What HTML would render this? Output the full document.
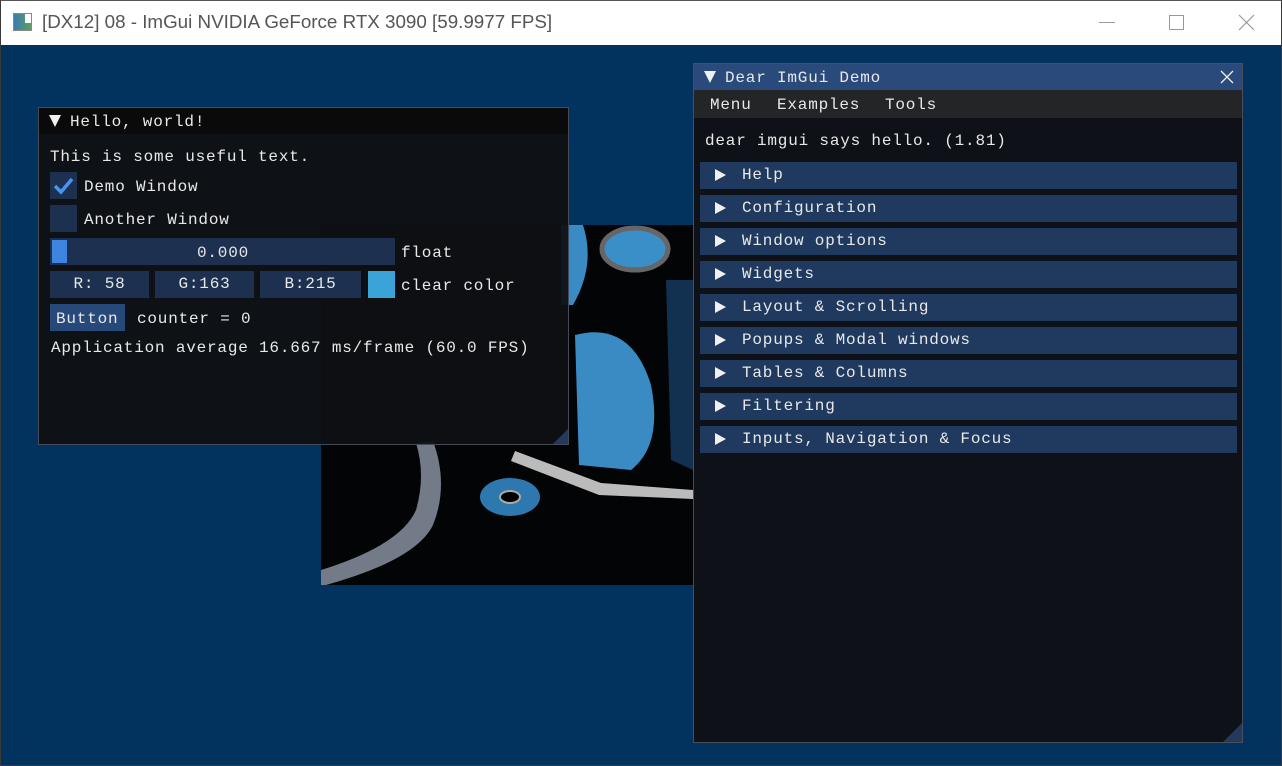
<!DOCTYPE html>
<html><head><meta charset="utf-8"><style>
*{margin:0;padding:0;box-sizing:border-box}
body{width:1282px;height:766px;overflow:hidden;background:#02335f;position:relative;font-family:"Liberation Mono","DejaVu Sans Mono",monospace;font-size:16px;letter-spacing:0.8px;color:#e8e8e8}
.abs{position:absolute}
#frame{left:0;top:0;width:1282px;height:766px;border:1px solid #3a3a3a;border-top:1px solid #555}
#tb{left:1px;top:1px;width:1280px;height:44px;background:#fff;font-family:"Liberation Sans",sans-serif;letter-spacing:0;font-size:18px;color:#444}
.t{position:absolute;white-space:pre;line-height:18px}
.box{position:absolute}
.hdr{position:absolute;left:700px;width:537px;height:27px;background:#1f3a5e}
.hdr .tri{position:absolute;left:15px;top:7px;width:0;height:0;border-left:11px solid #f0f0f0;border-top:6.5px solid transparent;border-bottom:6.5px solid transparent}
.hdr span{position:absolute;left:42px;top:4px;white-space:pre;line-height:18px}
.fbox{background:#1d3050;position:absolute;height:27px;top:163px;text-align:center;line-height:27px}
</style></head><body>
<div id="tb" class="abs">
 <div class="abs" style="left:12px;top:12px;width:19px;height:18px;border:1px solid #888;background:linear-gradient(90deg,#3a7ab0,#5aa060)"></div>
 <div class="abs" style="left:24px;top:13px;width:6px;height:9px;background:#fff"></div>
 <div class="t" style="left:41px;top:12px;font-size:18.8px;color:#555">[DX12] 08 - ImGui NVIDIA GeForce RTX 3090 [59.9977 FPS]</div>
 <div class="abs" style="left:1098px;top:21px;width:16px;height:1px;background:#999"></div>
 <div class="abs" style="left:1168px;top:14px;width:15px;height:15px;border:1px solid #999"></div>
 <svg class="abs" style="left:1237px;top:13px" width="18" height="18"><path d="M1 1L16 16M16 1L1 16" stroke="#999" stroke-width="1.2"/></svg>
</div>

<!-- background image -->
<div class="abs" style="left:321px;top:225px;width:372px;height:360px;background:#030405;overflow:hidden">
 <svg width="372" height="360">
  <ellipse cx="314" cy="24" rx="33" ry="21" fill="#3b8fc8" stroke="#666" stroke-width="5"/>
  <path d="M254 110 Q310 95 330 160 Q342 220 310 245 L258 240 Z" fill="#3a8ac4"/>
  <path d="M240 0 L262 0 Q275 40 252 80 L240 80Z" fill="#3a8ac4"/>
  <path d="M345 55 L372 55 L372 245 L350 235Z" fill="#123050"/>
  <ellipse cx="189" cy="272" rx="30" ry="19" fill="#2e78b0"/>
  <ellipse cx="189" cy="272" rx="10" ry="6" fill="#000" stroke="#aaa" stroke-width="2"/>
  <path d="M194 226 L280 258 L372 265 L372 274 L278 270 L190 236Z" fill="#bbb"/>
  <path d="M0 345 Q80 320 95 285 Q105 250 95 218 L112 216 Q128 260 112 300 Q95 335 5 360 L0 360Z" fill="#8f9aa8" opacity="0.8"/>
 </svg>
</div>

<!-- Hello window -->
<div class="abs" style="left:38px;top:107px;width:531px;height:338px;border:1px solid #464a55;background:rgba(15,16,19,0.94)">
 <div class="abs" style="left:0;top:0;width:529px;height:26px;background:#0a0a0b"></div>
 <div class="abs" style="left:10px;top:7px;width:0;height:0;border-top:12px solid #f0f0f0;border-left:6.5px solid transparent;border-right:6.5px solid transparent"></div>
 <div class="t" style="left:31px;top:5px">Hello, world!</div>
 <div class="t" style="left:11px;top:40px">This is some useful text.</div>
 <div class="box" style="left:11px;top:64px;width:27px;height:27px;background:#1d3050"></div>
 <svg class="abs" style="left:13px;top:66px" width="24" height="24"><path d="M3 12L9 18L20 5" stroke="#4596f0" stroke-width="3.5" fill="none"/></svg>
 <div class="t" style="left:45px;top:70px">Demo Window</div>
 <div class="box" style="left:11px;top:97px;width:27px;height:27px;background:#1d3050"></div>
 <div class="t" style="left:45px;top:103px">Another Window</div>
 <div class="box" style="left:11px;top:130px;width:345px;height:27px;background:#1d3050"></div>
 <div class="box" style="left:13px;top:132px;width:15px;height:23px;background:#3d85e0"></div>
 <div class="t" style="left:158px;top:136px">0.000</div>
 <div class="t" style="left:362px;top:136px">float</div>
 <div class="fbox" style="left:11px;width:99px">R: 58</div>
 <div class="fbox" style="left:116px;width:99px">G:163</div>
 <div class="fbox" style="left:221px;width:101px">B:215</div>
 <div class="box" style="left:329px;top:163px;width:27px;height:27px;background:#3aa3d7"></div>
 <div class="t" style="left:362px;top:169px">clear color</div>
 <div class="box" style="left:11px;top:196px;width:75px;height:27px;background:#27497a"></div>
 <div class="t" style="left:17px;top:202px">Button</div>
 <div class="t" style="left:98px;top:202px">counter = 0</div>
 <div class="t" style="left:12px;top:231px">Application average 16.667 ms/frame (60.0 FPS)</div>
 <div class="abs" style="right:0;bottom:0;width:0;height:0;border-bottom:15px solid #233a5c;border-left:15px solid transparent"></div>
</div>

<!-- Demo window -->
<div class="abs" style="left:693px;top:63px;width:550px;height:680px;border:1px solid #4a4e58;background:rgba(15,16,19,0.95)">
 <div class="abs" style="left:0;top:0;width:548px;height:26px;background:#2a4a7c"></div>
 <div class="abs" style="left:10px;top:7px;width:0;height:0;border-top:12px solid #f0f0f0;border-left:6.5px solid transparent;border-right:6.5px solid transparent"></div>
 <div class="t" style="left:31px;top:5px">Dear ImGui Demo</div>
 <svg class="abs" style="left:526px;top:6px" width="14" height="14"><path d="M1 1L13 13M13 1L1 13" stroke="#eee" stroke-width="1.3"/></svg>
 <div class="abs" style="left:0;top:26px;width:548px;height:28px;background:#242526"></div>
 <div class="t" style="left:16px;top:32px">Menu</div>
 <div class="t" style="left:83px;top:32px">Examples</div>
 <div class="t" style="left:191px;top:32px">Tools</div>
 <div class="t" style="left:11px;top:68px">dear imgui says hello. (1.81)</div>
 <div class="abs" style="right:0;bottom:0;width:0;height:0;border-bottom:19px solid #233a5c;border-left:19px solid transparent"></div>
</div>
<div class="hdr" style="top:162px"><div class="tri"></div><span>Help</span></div>
<div class="hdr" style="top:195px"><div class="tri"></div><span>Configuration</span></div>
<div class="hdr" style="top:228px"><div class="tri"></div><span>Window options</span></div>
<div class="hdr" style="top:261px"><div class="tri"></div><span>Widgets</span></div>
<div class="hdr" style="top:294px"><div class="tri"></div><span>Layout &amp; Scrolling</span></div>
<div class="hdr" style="top:327px"><div class="tri"></div><span>Popups &amp; Modal windows</span></div>
<div class="hdr" style="top:360px"><div class="tri"></div><span>Tables &amp; Columns</span></div>
<div class="hdr" style="top:393px"><div class="tri"></div><span>Filtering</span></div>
<div class="hdr" style="top:426px"><div class="tri"></div><span>Inputs, Navigation &amp; Focus</span></div>
<div id="frame" class="abs"></div>
</body></html>
